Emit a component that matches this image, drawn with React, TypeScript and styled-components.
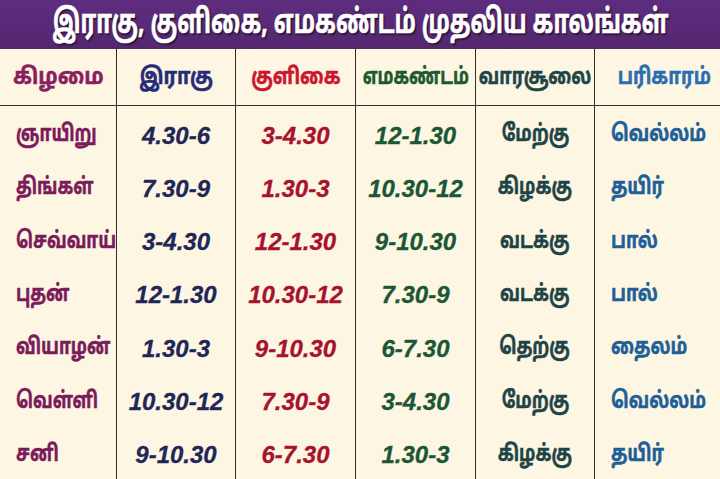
import React from 'react';
import styled, { createGlobalStyle } from 'styled-components';

const TAMIL = `"Noto Sans Tamil", "Lohit Tamil", "Latha", "Noto Sans", "Liberation Sans", sans-serif`;

const GlobalStyle = createGlobalStyle`
    html, body {
        margin: 0;
        padding: 0;
        background: #fdf6e3;
    }
    body {
        font-family: ${TAMIL};
    }
`;

type Tone = 'day' | 'rahu' | 'kuligai' | 'ema' | 'soolai' | 'remedy';

const tones: Record<Tone, string> = {
    day: '#7a1b5a',
    rahu: '#1f2658',
    kuligai: '#a8122e',
    ema: '#1b5636',
    soolai: '#1f4446',
    remedy: '#1f5f98',
};

const headTones: Record<Tone, string> = {
    day: '#8a1f60',
    rahu: '#262c78',
    kuligai: '#cc1630',
    ema: '#1c5a2c',
    soolai: '#1e4547',
    remedy: '#2c6db0',
};

const Page = styled.div`
    display: flex;
    flex-direction: column;
    width: 720px;
    height: 479px;
    overflow: hidden;
    background: #fdf6e3;
`;

const TitleBar = styled.div`
    display: flex;
    align-items: center;
    justify-content: center;
    height: 49px;
    background: linear-gradient(#5e2c7e, #55276f);
    overflow: hidden;
`;

const TitleText = styled.span`
    display: inline-block;
    white-space: nowrap;
    color: #ffffff;
    font-family: ${TAMIL};
    font-weight: 700;
    font-size: 33px;
    transform: scaleX(0.69);
    -webkit-text-stroke: 0.6px #ffffff;
    text-shadow: 1px 1px 0 #2a1238, 2px 2px 2px #2a1238;
`;

const Table = styled.div`
    flex: 1;
    display: grid;
    grid-template-columns: 117px 119px 120px 120px 119px 1fr;
    grid-template-rows: 57px repeat(7, 1fr);
`;

const Cell = styled.div<{ $tone: Tone; $last?: boolean; $left?: boolean }>`
    display: flex;
    align-items: center;
    justify-content: ${(p) => (p.$left ? 'flex-start' : 'center')};
    padding: 6px 0 0 ${(p) => (p.$left ? '16px' : '0')};
    border-right: ${(p) => (p.$last ? 'none' : '1.5px solid #3b2c2c')};
    color: ${(p) => tones[p.$tone]};
    white-space: nowrap;
`;

const HeadCell = styled(Cell)`
    padding: 2px 0 0;
    justify-content: center;
    border-bottom: 1.5px solid #3b2c2c;
    color: ${(p) => headTones[p.$tone]};
`;

const Word = styled.span<{ $left?: boolean; $squeeze: number }>`
    display: inline-block;
    font-family: ${TAMIL};
    font-weight: 700;
    font-size: 23px;
    -webkit-text-stroke: 0.5px currentColor;
    transform: scaleX(${(p) => p.$squeeze});
    transform-origin: ${(p) => (p.$left ? 'left center' : 'center')};
`;

const TimeCell = styled(Cell)`
    font-family: "Liberation Sans", Arial, sans-serif;
    font-weight: 700;
    font-style: italic;
    font-size: 24px;
    -webkit-text-stroke: 0.3px currentColor;
`;

const heads: { label: string; tone: Tone; squeeze: number }[] = [
    { label: 'கிழமை', tone: 'day', squeeze: 0.9 },
    { label: 'இராகு', tone: 'rahu', squeeze: 0.85 },
    { label: 'குளிகை', tone: 'kuligai', squeeze: 0.8 },
    { label: 'எமகண்டம்', tone: 'ema', squeeze: 0.74 },
    { label: 'வாரசூலை', tone: 'soolai', squeeze: 0.78 },
    { label: 'பரிகாரம்', tone: 'remedy', squeeze: 0.8 },
];

const rows = [
    ['ஞாயிறு', '4.30-6', '3-4.30', '12-1.30', 'மேற்கு', 'வெல்லம்'],
    ['திங்கள்', '7.30-9', '1.30-3', '10.30-12', 'கிழக்கு', 'தயிர்'],
    ['செவ்வாய்', '3-4.30', '12-1.30', '9-10.30', 'வடக்கு', 'பால்'],
    ['புதன்', '12-1.30', '10.30-12', '7.30-9', 'வடக்கு', 'பால்'],
    ['வியாழன்', '1.30-3', '9-10.30', '6-7.30', 'தெற்கு', 'தைலம்'],
    ['வெள்ளி', '10.30-12', '7.30-9', '3-4.30', 'மேற்கு', 'வெல்லம்'],
    ['சனி', '9-10.30', '6-7.30', '1.30-3', 'கிழக்கு', 'தயிர்'],
];

const App = () => (
    <Page>
        <GlobalStyle />
        <TitleBar>
            <TitleText>இராகு, குளிகை, எமகண்டம் முதலிய காலங்கள்</TitleText>
        </TitleBar>
        <Table>
            {heads.map((h, i) => (
                <HeadCell key={h.label} $tone={h.tone} $last={i === 5}>
                    <Word $squeeze={h.squeeze}>{h.label}</Word>
                </HeadCell>
            ))}
            {rows.map(([day, rahu, kuligai, ema, soolai, remedy]) => (
                <React.Fragment key={day}>
                    <Cell $tone="day" $left>
                        <Word $left $squeeze={0.75}>
                            {day}
                        </Word>
                    </Cell>
                    <TimeCell $tone="rahu">{rahu}</TimeCell>
                    <TimeCell $tone="kuligai">{kuligai}</TimeCell>
                    <TimeCell $tone="ema">{ema}</TimeCell>
                    <Cell $tone="soolai">
                        <Word $squeeze={0.76}>{soolai}</Word>
                    </Cell>
                    <Cell $tone="remedy" $left $last>
                        <Word $left $squeeze={0.78}>
                            {remedy}
                        </Word>
                    </Cell>
                </React.Fragment>
            ))}
        </Table>
    </Page>
);

export default App;
